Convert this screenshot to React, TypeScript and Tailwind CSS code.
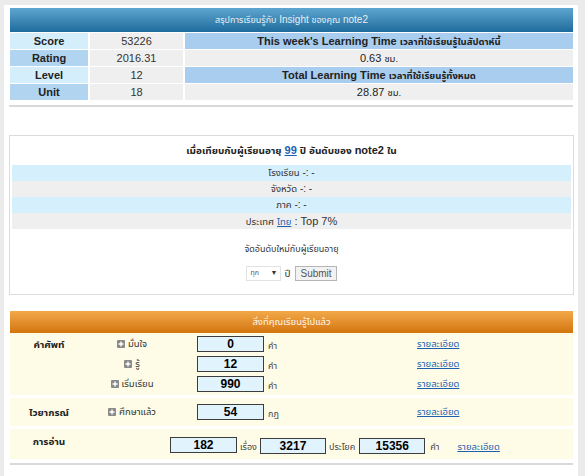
import React from "react";

function T({ children, className = "text-[9.5px]" }: { children: React.ReactNode; className?: string }) {
  return <span className={className}>{children}</span>;
}

function Box({ v, w = "w-[67px]" }: { v: string; w?: string }) {
  return (
    <span className={`inline-flex ${w} h-[16px] items-center justify-center border border-[#3d3d3d] bg-[#e1f3fd] text-[12px] font-bold text-black leading-none`}>
      {v}
    </span>
  );
}

function Plus() {
  return (
    <span className="inline-flex w-[8px] h-[8px] items-center justify-center bg-[#8a8a8a] rounded-[1px] mr-[3px]">
      <svg width="6" height="6" viewBox="0 0 6 6">
        <path d="M3 0.5V5.5M0.5 3H5.5" stroke="#fff" strokeWidth="1.4" />
      </svg>
    </span>
  );
}

function Link({ children }: { children: React.ReactNode }) {
  return <span className="text-[9.5px] text-[#1e5fb0] underline">{children}</span>;
}

function Unit({ children, className = "ml-[4px]" }: { children: React.ReactNode; className?: string }) {
  return <span className={`${className} mt-[5px] text-[9px] text-[#444]`}>{children}</span>;
}

function VocabRow({ label, item, v, unit, h = "h-[20px]" }: { label?: string; item: string; v: string; unit: string; h?: string }) {
  return (
    <div className={`flex ${h} items-center`}>
      <div className="w-[78px] text-center text-[10px] font-bold text-[#222]">{label}</div>
      <div className="w-[84px] ml-[2px] flex items-center justify-center text-[9.5px] text-[#333]">
        <Plus />
        {item}
      </div>
      <div className="w-[243px] flex items-center pl-[23px]">
        <Box v={v} />
        <Unit>{unit}</Unit>
      </div>
      <Link>รายละเอียด</Link>
    </div>
  );
}

export default function App() {
  const rowsLeft = [
    { k: "Score", v: "53226", bg: "bg-[#d4eefb]" },
    { k: "Rating", v: "2016.31", bg: "bg-[#b1d4f0]" },
    { k: "Level", v: "12", bg: "bg-[#d4eefb]" },
    { k: "Unit", v: "18", bg: "bg-[#b1d4f0]" },
  ];
  const rightCells: { t: React.ReactNode; h: boolean }[] = [
    { t: <span>This week's Learning Time <T>เวลาที่ใช้เรียนรู้ในสัปดาห์นี้</T></span>, h: true },
    { t: <span>0.63 <T>ชม.</T></span>, h: false },
    { t: <span>Total Learning Time <T>เวลาที่ใช้เรียนรู้ทั้งหมด</T></span>, h: true },
    { t: <span>28.87 <T>ชม.</T></span>, h: false },
  ];
  return (
    <div className="w-[585px] h-[476px] overflow-hidden bg-[#ebebeb] pt-[5px] pl-[4px] pr-[7px] font-['Liberation_Sans','Noto_Sans_Thai_UI','Noto_Sans_Thai',sans-serif]">
      <div className="h-full bg-white pl-[6px] pr-[5px] pt-[3px]">
        {/* Section 1 */}
        <div className="pb-[5px] border-b-2 border-[#d9d9d9] -ml-[1px] pl-[1px]">
          <div className="h-[24px] flex items-center justify-center bg-gradient-to-b from-[#5ea6d1] to-[#1c6c9d] text-[10px] text-[#e8eef2]">
            <span>
              <T className="text-[9px]">สรุปการเรียนรู้กับ</T> Insight <T className="text-[9px]">ของคุณ</T> note2
            </span>
          </div>
          <div className="mt-[1px] flex flex-col gap-[1px]">
            {rowsLeft.map((r, i) => (
              <div key={r.k} className="flex h-[16px] gap-[2px]">
                <div className={`w-[78px] ${r.bg} flex items-center justify-center text-[11px] font-bold text-[#222]`}>{r.k}</div>
                <div className="w-[93px] bg-[#efefef] flex items-center justify-center text-[11px] text-[#333]">{r.v}</div>
                <div
                  className={`flex-1 flex items-center justify-center ${
                    rightCells[i].h ? "bg-[#a9cdee] font-bold text-[11px] text-[#222]" : "bg-[#efefef] text-[11px] text-[#222]"
                  }`}
                >
                  {rightCells[i].t}
                </div>
              </div>
            ))}
          </div>
        </div>

        {/* Section 2 */}
        <div className="mt-[28px] -mx-[1px] border border-[#dcdcdc] h-[160px] px-[2px]">
          <div className="h-[29px] flex items-center justify-center text-[11px] font-bold text-[#222]">
            <span>
              <T className="text-[10px]">เมื่อเทียบกับผู้เรียนอายุ</T> <span className="text-[#1e5fb0] underline">99</span> <T className="text-[10px]">ปี อันดับของ</T> note2 <T className="text-[10px]">ใน</T>
            </span>
          </div>
          <div className="h-[16px] bg-[#d5effc] flex items-center justify-center text-[10px] text-[#333]">
            <span><T>โรงเรียน</T> -: -</span>
          </div>
          <div className="h-[16px] bg-[#efefef] flex items-center justify-center text-[10px] text-[#333]">
            <span><T>จังหวัด</T> -: -</span>
          </div>
          <div className="h-[16px] bg-[#d5effc] flex items-center justify-center text-[10px] text-[#333]">
            <span><T>ภาค</T> -: -</span>
          </div>
          <div className="h-[16px] bg-[#efefef] flex items-center justify-center text-[11px] text-[#333]">
            <span>
              <T>ประเทศ</T> <T className="text-[9.5px] text-[#1e5fb0] underline">ไทย</T> : Top 7%
            </span>
          </div>
          <div className="mt-[14px] h-[14px] flex items-center justify-center text-[9px] text-[#333]">จัดอันดับใหม่กับผู้เรียนอายุ</div>
          <div className="mt-[8px] flex items-center justify-center h-[16px] text-[10px] text-[#333]">
            <span className="w-[35px] h-[15px] border border-[#e2e2e2] flex items-center justify-between px-[3px] text-[7px] text-[#555]">
              ทุก <span className="text-[7px] text-[#333]">▼</span>
            </span>
            <span className="ml-[3px] text-[10px]">ปี</span>
            <span className="ml-[5px] h-[15px] px-[4px] flex items-center border border-[#b5b5b5] bg-[#f2f2f2] text-[10px] text-[#555]">Submit</span>
          </div>
        </div>

        {/* Section 3 */}
        <div className="mt-[16px] border-b-2 border-[#d9d9d9] pb-[4px]">
          <div className="h-[22px] flex items-center justify-center bg-gradient-to-b from-[#f3a948] to-[#d27506] text-[9.5px] text-[#fff6e6]">
            สิ่งที่คุณเรียนรู้ไปแล้ว
          </div>
          <div className="bg-[#fefce6] pt-[1px] pb-[1px]">
            <VocabRow label="คำศัพท์" item="มั่นใจ" v="0" unit="คำ" />
            <VocabRow item="รู้" v="12" unit="คำ" />
            <VocabRow item="เริ่มเรียน" v="990" unit="คำ" />
          </div>
          <div className="h-[3px] bg-white" />
          <div className="bg-[#fefce6]">
            <VocabRow label="ไวยากรณ์" item="ศึกษาแล้ว" v="54" unit="กฎ" h="h-[28px]" />
          </div>
          <div className="h-[3px] bg-white" />
          <div className="bg-[#fefce6] h-[30px] pt-[4px] flex items-start">
            <div className="w-[78px] h-[16px] flex items-center justify-center text-[10px] font-bold text-[#222]">การอ่าน</div>
            <div className="ml-[82px] flex items-center">
              <Box v="182" w="w-[67px]" />
              <Unit className="ml-[3px]">เรื่อง</Unit>
              <span className="ml-[3px]"><Box v="3217" w="w-[66px]" /></span>
              <Unit className="ml-[3px]">ประโยค</Unit>
              <span className="ml-[4px]"><Box v="15356" w="w-[66px]" /></span>
              <Unit className="ml-[5px]">คำ</Unit>
              <span className="ml-[18px]"><Link>รายละเอียด</Link></span>
            </div>
          </div>
        </div>
      </div>
    </div>
  );
}
